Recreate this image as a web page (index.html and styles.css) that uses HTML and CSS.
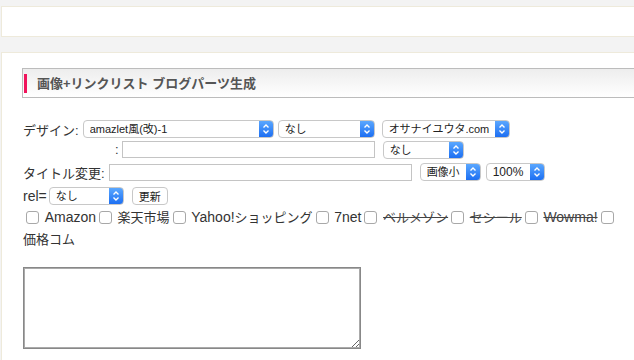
FILE: index.html
```html
<!DOCTYPE html>
<html lang="ja">
<head>
    <meta charset="UTF-8">
    <meta name="viewport" content="width=device-width, initial-scale=1.0">
    <title>画像+リンクリスト ブログパーツ生成</title>
    <link rel="stylesheet" href="styles.css">
</head>
<body>
    <div class="page">
        <div class="topbar"></div>
        <div class="main">
            <h2 class="heading"><span>画像+リンクリスト ブログパーツ生成</span></h2>
            <form class="maker">
                <div class="row row-design">
                    <label class="lbl">デザイン:</label>
                    <select class="sel w-design"><option>amazlet風(改)-1</option></select>
                    <select class="sel w-none1"><option>なし</option></select>
                    <select class="sel w-site"><option>オサナイユウタ.com</option></select>
                </div>
                <div class="row row-sub">
                    <label class="lbl colon">:</label>
                    <input type="text" class="txt w-sub">
                    <select class="sel w-none2"><option>なし</option></select>
                </div>
                <div class="row row-title">
                    <label class="lbl">タイトル変更:</label>
                    <input type="text" class="txt w-title">
                    <select class="sel w-size"><option>画像小</option></select>
                    <select class="sel w-pct"><option>100%</option></select>
                </div>
                <div class="row row-rel">
                    <label class="lbl en">rel=</label>
                    <select class="sel w-rel"><option>なし</option></select>
                    <button type="button" class="btn">更新</button>
                </div>
                <div class="shops">
                    <input type="checkbox" class="chk"> <span class="en">Amazon</span><input type="checkbox" class="chk"> 楽天市場<input type="checkbox" class="chk"> <span class="en">Yahoo!</span>ショッピング<input type="checkbox" class="chk"> <span class="en">7net</span><input type="checkbox" class="chk"> <s>ベルメゾン</s><input type="checkbox" class="chk"> <s>セシール</s><input type="checkbox" class="chk"> <s class="en">Wowma!</s><input type="checkbox" class="chk"> 価格コム
                </div>
                <textarea class="output"></textarea>
            </form>
        </div>
    </div>
</body>
</html>
```

FILE: styles.css
```css
body {
    margin: 0;
    background-color: #f3f3f3;
    font-family: "Liberation Sans", "Noto Sans CJK JP", sans-serif;
    color: #333;
    overflow: hidden;
}

.page {
    width: 700px;
    padding-left: 1px;
}

.topbar {
    margin-top: 6px;
    height: 29px;
    background-color: #ffffff;
    border: 1px solid #eeeadb;
}

.main {
    margin-top: 15px;
    height: 400px;
    background-color: #ffffff;
    border: 1px solid #eeeadb;
    padding: 15px 0 0 20px;
}

.heading {
    margin: 0;
    height: 28px;
    border: 1px solid #bcbcbc;
    background: linear-gradient(#ededed, #ffffff);
    display: flex;
    align-items: center;
    padding-left: 1px;
}

.heading span {
    border-left: 3px solid #f0145c;
    padding-left: 10px;
    line-height: 19px;
    font-size: 13px;
    font-weight: bold;
    color: #555555;
}

.maker {
    margin-top: 20px;
    padding-left: 1px;
    font-size: 13px;
}

.row {
    display: flex;
    align-items: center;
}

.row-design { height: 22px; }
.row-sub { height: 19px; }
.row-title { height: 26px; }
.row-rel { height: 21px; }

.lbl {
    margin-right: 4px;
}

.lbl.en {
    font-size: 14px;
    margin-right: 1px;
}

.colon {
    margin-left: 92px;
    margin-right: 3px;
}

.sel {
    appearance: none;
    -webkit-appearance: none;
    height: 18px;
    border: 1px solid #c8c8c8;
    border-radius: 4px;
    padding: 0 16px 0 6px;
    font-family: "Liberation Sans", "Noto Sans CJK JP", sans-serif;
    font-size: 11px;
    color: #222;
    background-color: #ffffff;
    background-image: url("data:image/svg+xml,%3Csvg xmlns='http://www.w3.org/2000/svg' width='14' height='18'%3E%3Cpath d='M4.5 7.5l2.5-2.5 2.5 2.5M4.5 10.5l2.5 2.5 2.5-2.5' fill='none' stroke='white' stroke-width='1.4'/%3E%3C/svg%3E"), linear-gradient(#5aa7ff, #1d6ff2);
    background-repeat: no-repeat;
    background-position: right center, right center;
    background-size: 14px 18px, 14px 100%;
}

.w-design { width: 191px; }
.w-none1 { width: 97px; margin-left: 4px; }
.w-site { width: 128px; margin-left: 7px; }
.w-none2 { width: 81px; margin-left: 8px; }
.w-size { width: 61px; margin-left: 8px; }
.w-pct { width: 59px; margin-left: 5px; font-size: 12px; }
.w-rel { width: 75px; margin-left: 1px; }

.txt {
    height: 17px;
    box-sizing: border-box;
    border: 1px solid #c4c4c4;
    padding: 0 3px;
}

.w-sub { width: 253px; }
.w-title { width: 303px; }

.btn {
    margin-left: 8px;
    width: 36px;
    height: 18px;
    padding: 0;
    border: 1px solid #c8c8c8;
    border-radius: 4px;
    background-color: #ffffff;
    font-family: "Noto Sans CJK JP", sans-serif;
    font-size: 11px;
    color: #222;
}

.shops {
    width: 604px;
    font-size: 13px;
    line-height: 22px;
}

.shops .en {
    font-size: 14px;
}

.chk {
    appearance: none;
    -webkit-appearance: none;
    width: 13px;
    height: 13px;
    margin: 0 2px 0 3px;
    border: 1px solid #a8a8a8;
    border-radius: 3px;
    background-color: #ffffff;
    vertical-align: -2px;
}

.shops s {
    color: #444;
}

.output {
    display: block;
    margin-top: 16px;
    width: 338px;
    height: 82px;
    box-sizing: border-box;
    border: 1px solid #888888;
    outline: 1px solid #aaaaaa;
    outline-offset: -2px;
    resize: both;
}
```
